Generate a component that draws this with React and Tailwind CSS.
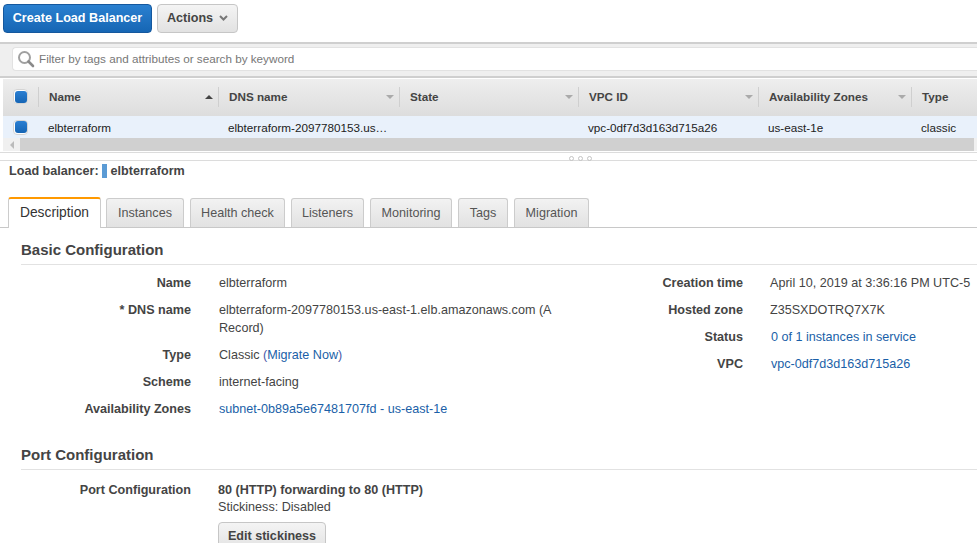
const columns = [
  { label: "Name", width: "w-[180px]", arrow: "up" },
  { label: "DNS name", width: "w-[181px]", arrow: "down" },
  { label: "State", width: "w-[179px]", arrow: "down" },
  { label: "VPC ID", width: "w-[180px]", arrow: "down" },
  { label: "Availability Zones", width: "w-[153px]", arrow: "down" },
  { label: "Type", width: "flex-1", arrow: null },
];

const cells = [
  { text: "elbterraform", width: "w-[180px]" },
  { text: "elbterraform-2097780153.us…", width: "w-[181px]" },
  { text: "", width: "w-[179px]" },
  { text: "vpc-0df7d3d163d715a26", width: "w-[180px]" },
  { text: "us-east-1e", width: "w-[153px]" },
  { text: "classic", width: "flex-1" },
];

const tabs = [
  { label: "Instances", width: "w-[78px]" },
  { label: "Health check", width: "w-[95px]" },
  { label: "Listeners", width: "w-[73px]" },
  { label: "Monitoring", width: "w-[82px]" },
  { label: "Tags", width: "w-[50px]" },
  { label: "Migration", width: "w-[75px]" },
];

function Checkbox() {
  return (
    <span className="flex h-[15px] w-[15px] items-center justify-center rounded-[4px] border border-[#d4d4d4] bg-white">
      <span className="h-[12px] w-[12px] rounded-[3px] bg-gradient-to-b from-[#2a7fd2] to-[#1565b5]" />
    </span>
  );
}

function Row({ label, labelWidth = "w-[191px]", gap = "ml-[28px]", children }) {
  return (
    <div className="flex pb-[9px]">
      <div className={`${labelWidth} shrink-0 text-right font-bold text-[#444]`}>{label}</div>
      <div className={`${gap} text-[#444]`}>{children}</div>
    </div>
  );
}

function Link({ children }) {
  return <span className="text-[#1a5fa8]">{children}</span>;
}

export default function App() {
  return (
    <div className="h-[543px] w-[977px] overflow-hidden bg-white font-['Liberation_Sans',Arial,sans-serif] text-[12.6px] leading-[18px] text-[#444]">
      {/* Toolbar */}
      <div className="flex h-[42px] gap-[5px] pl-[3px] pt-[4px]">
        <button className="h-[29px] w-[149px] rounded-[4px] border border-[#15589e] bg-gradient-to-b from-[#2a80d0] to-[#1666b4] pb-[2px] font-bold text-white">
          Create Load Balancer
        </button>
        <button className="flex h-[29px] w-[81px] items-center justify-center gap-[6px] rounded-[4px] border border-[#c6c6c6] bg-gradient-to-b from-[#f4f4f4] to-[#e2e2e2] pb-[2px] font-bold text-[#444]">
          Actions
          <svg width="9" height="6" viewBox="0 0 9 6" fill="none">
            <path d="M1 1l3.5 3.5L8 1" stroke="#777" strokeWidth="2" />
          </svg>
        </button>
      </div>

      {/* Filter */}
      <div className="flex h-[36px] items-start border-y-2 border-[#cfcfcf] bg-[#efefef] pl-[12px] pt-[3px]">
        <div className="flex h-[24px] flex-1 items-center gap-[4px] rounded-l-[4px] border border-r-0 border-[#e2e2e2] bg-white pl-[4px] text-[11.7px] text-[#777]">
          <svg width="18" height="18" viewBox="0 0 18 18" fill="none" className="shrink-0">
            <circle cx="7.5" cy="7.5" r="5.5" stroke="#a0a0a0" strokeWidth="2" />
            <path d="M11.5 11.5l4.5 4.5" stroke="#8a8a8a" strokeWidth="2.6" strokeLinecap="round" />
          </svg>
          Filter by tags and attributes or search by keyword
        </div>
      </div>

      {/* Table */}
      <div className="ml-[3px] text-[11.7px]">
        <div className="flex h-[38px] items-center border-t border-white bg-gradient-to-b from-[#eeeeee] to-[#dddddd] pb-[2px] font-bold text-[#444]">
          <div className="flex w-[35px] items-center justify-center">
            <Checkbox />
          </div>
          {columns.map((col) => (
            <div
              key={col.label}
              className={`${col.width} flex h-[20px] items-center justify-between border-l border-[#cfcfcf] pl-[10px] pr-[5px]`}
            >
              <span>{col.label}</span>
              {col.arrow === "up" && (
                <span className="h-0 w-0 border-x-[4px] border-b-[4px] border-x-transparent border-b-[#444]" />
              )}
              {col.arrow === "down" && (
                <span className="h-0 w-0 border-x-[4px] border-t-[4px] border-x-transparent border-t-[#aaa]" />
              )}
            </div>
          ))}
        </div>
        <div className="flex h-[22px] items-center bg-[#e9f1fb] text-[#222]">
          <div className="flex w-[35px] items-center justify-center">
            <Checkbox />
          </div>
          {cells.map((cell, i) => (
            <div key={i} className={`${cell.width} whitespace-nowrap pl-[10px] pt-[1px]`}>
              {cell.text}
            </div>
          ))}
        </div>
        {/* Horizontal scrollbar */}
        <div className="flex h-[13px] bg-[#f0f0f0]">
          <div className="flex w-[17px] items-center justify-center">
            <span className="h-0 w-0 border-y-[4px] border-r-[4px] border-y-transparent border-r-[#bbb]" />
          </div>
          <div className="mr-[3px] flex-1 bg-[#d0d0d0]" />
        </div>
      </div>

      {/* Resizer */}
      <div className="relative mt-[1px] h-[9px] border-y border-[#dcdcdc]">
        <div className="absolute left-[569px] top-[3px] flex gap-[4px]">
          <span className="h-[5px] w-[5px] rounded-full border border-[#c4c4c4]" />
          <span className="h-[5px] w-[5px] rounded-full border border-[#c4c4c4]" />
          <span className="h-[5px] w-[5px] rounded-full border border-[#c4c4c4]" />
        </div>
      </div>

      {/* Selected */}
      <div className="flex h-[19px] items-center pl-[9px] pt-[1px] font-bold">
        Load balancer:
        <span className="ml-[3px] mr-[4px] h-[14px] w-[5px] bg-[#5b9bd5]" />
        elbterraform
      </div>

      {/* Tabs */}
      <div className="mt-[17px] flex h-[31px] items-end gap-[6px] border-b border-[#c8c8c8] pl-[8px] text-[#555]">
        <div className="relative top-[1px] -mr-[1px] flex h-[31px] w-[93px] items-center justify-center rounded-t-[3px] border-x border-t-2 border-[#ccc] border-t-[#f90] bg-white pb-[1px] text-[13.8px] text-[#333]">
          Description
        </div>
        {tabs.map((tab) => (
          <div
            key={tab.label}
            className={`${tab.width} flex h-[29px] items-center justify-center rounded-t-[3px] border-x border-t border-[#ccc] bg-gradient-to-b from-[#f2f2f2] to-[#e2e2e2] pb-[1px]`}
          >
            {tab.label}
          </div>
        ))}
      </div>

      {/* Basic configuration */}
      <div className="ml-[21px] mt-[12px] h-[25px] border-b border-[#e2e2e2] text-[15px] font-bold leading-[20px] text-[#444]">
        Basic Configuration
      </div>
      <div className="mt-[9px] flex">
        <div className="w-[560px] shrink-0">
          <Row label="Name">elbterraform</Row>
          <Row label="* DNS name">
            <div className="w-[340px]">elbterraform-2097780153.us-east-1.elb.amazonaws.com (A Record)</div>
          </Row>
          <Row label="Type">
            Classic <span className="text-[#4a5aa8]">(</span>
            <Link>Migrate Now</Link>
            <span className="text-[#4a5aa8]">)</span>
          </Row>
          <Row label="Scheme">internet-facing</Row>
          <Row label="Availability Zones">
            <Link>subnet-0b89a5e67481707fd - us-east-1e</Link>
          </Row>
        </div>
        <div className="flex-1">
          <Row label="Creation time" labelWidth="w-[183px]" gap="ml-[27px]">
            <span className="whitespace-nowrap">April 10, 2019 at 3:36:16 PM UTC-5</span>
          </Row>
          <Row label="Hosted zone" labelWidth="w-[183px]" gap="ml-[27px]">Z35SXDOTRQ7X7K</Row>
          <Row label="Status" labelWidth="w-[183px]" gap="ml-[28px]">
            <Link>0 of 1 instances in service</Link>
          </Row>
          <Row label="VPC" labelWidth="w-[183px]" gap="ml-[28px]">
            <Link>vpc-0df7d3d163d715a26</Link>
          </Row>
        </div>
      </div>

      {/* Port configuration */}
      <div className="ml-[21px] mt-[18px] h-[25px] border-b border-[#e2e2e2] text-[15px] font-bold leading-[20px] text-[#444]">
        Port Configuration
      </div>
      <div className="mt-[11px] flex">
        <div className="w-[191px] shrink-0 text-right font-bold">Port Configuration</div>
        <div className="ml-[27px]">
          <div className="h-[17px] font-bold">80 (HTTP) forwarding to 80 (HTTP)</div>
          <div>Stickiness: Disabled</div>
          <button className="mt-[6px] h-[29px] w-[108px] rounded-[4px] border border-[#c6c6c6] bg-gradient-to-b from-[#f4f4f4] to-[#e2e2e2] pb-[2px] font-bold text-[#444]">
            Edit stickiness
          </button>
        </div>
      </div>
    </div>
  );
}
